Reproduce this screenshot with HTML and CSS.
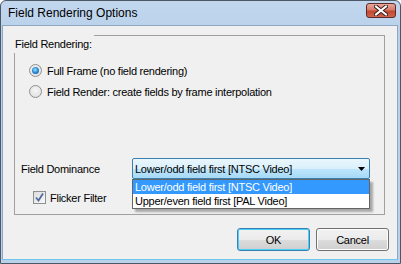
FILE: index.html
```html
<!DOCTYPE html>
<html lang="en">
<head>
    <meta charset="UTF-8">
    <title>Field Rendering Options</title>
    <link rel="stylesheet" href="styles.css">
</head>
<body>
    <div class="window">
        <!-- Title bar -->
        <div class="titlebar">
            <span class="title">Field Rendering Options</span>
            <span class="close">
                <svg width="14" height="11" viewBox="0 0 14 11">
                    <path d="M2 1.5 L12 9.5 M12 1.5 L2 9.5" stroke="#3b1d1d" stroke-width="4" stroke-linecap="square"/>
                    <path d="M2 1.5 L12 9.5 M12 1.5 L2 9.5" stroke="#ffffff" stroke-width="2" stroke-linecap="square"/>
                </svg>
            </span>
        </div>

        <div class="client">
            <!-- Group box -->
            <div class="group">
                <div class="group-label">Field Rendering:</div>

                <div class="options">
                    <div class="option"><span class="radio checked"></span>Full Frame (no field rendering)</div>
                    <div class="option"><span class="radio"></span>Field Render: create fields by frame interpolation</div>
                </div>

                <div class="dominance">
                    <span class="dom-label">Field Dominance</span>
                    <div class="combo">
                        <span class="combo-text">Lower/odd field first [NTSC Video]</span>
                        <svg class="arrow" width="7" height="4" viewBox="0 0 7 4"><path d="M0 0 H7 L3.5 4 Z" fill="#000"/></svg>
                        <!-- open drop-down list -->
                        <ul class="dropdown">
                            <li class="selected">Lower/odd field first [NTSC Video]</li>
                            <li>Upper/even field first [PAL Video]</li>
                        </ul>
                    </div>
                </div>

                <div class="check-row">
                    <span class="checkbox">
                        <svg width="9" height="9" viewBox="0 0 9 9"><path d="M1 4.5 L3.5 7.5 L8 0.5" fill="none" stroke="#4f6aa3" stroke-width="1.8"/></svg>
                    </span>
                    Flicker Filter
                </div>
            </div>

            <!-- Dialog buttons -->
            <div class="buttons">
                <button class="btn default">OK</button>
                <button class="btn">Cancel</button>
            </div>
        </div>
    </div>
</body>
</html>
```

FILE: styles.css
```css
/* General styling */
body {
    margin: 0;
    font-family: "Liberation Sans", Arial, sans-serif;
    font-size: 11px;
    letter-spacing: -0.25px;
    color: #000;
    background: #ffffff;
}

/* Window frame */
.window {
    box-sizing: border-box;
    width: 401px;
    height: 264px;
    border: 1px solid #4d5866;
    border-radius: 6px 6px 0 0;
    background: linear-gradient(#c2d7ee, #b9d1ea 30px, #b9d1ea);
    padding: 0 2px 3px 1px;
    display: flex;
    flex-direction: column;
}

.titlebar {
    height: 24px;
    display: flex;
    align-items: center;
    justify-content: space-between;
    padding-left: 6px;
    padding-right: 2px;
}

.title {
    font-size: 12px;
    letter-spacing: 0;
    color: #000;
}

.close {
    width: 30px;
    height: 15px;
    box-sizing: border-box;
    margin-top: -5px;
    border: 1px solid #5b2a2a;
    border-radius: 3px;
    background: linear-gradient(#e9a898, #d67d6c 45%, #c2472f 55%, #d0654d);
    display: flex;
    align-items: center;
    justify-content: center;
}

/* Client area */
.client {
    flex: 1;
    background: #f0f0f0;
    border: 1px solid #8fa6c0;
    border-bottom-color: #6ec6e8;
    display: flex;
    flex-direction: column;
}

/* Group box */
.group {
    position: relative;
    box-sizing: border-box;
    margin: 9px 0 0 11px;
    width: 371px;
    height: 180px;
    border: 1px solid #a0a0a0;
}

.group-label {
    position: absolute;
    top: -1px;
    left: -1px;
    padding: 3px 2px 3px 1px;
    background: #f0f0f0;
}

.options {
    margin-top: 24px;
    padding-left: 14px;
}

.option {
    height: 21px;
    display: flex;
    align-items: center;
}

.radio {
    box-sizing: border-box;
    width: 13px;
    height: 13px;
    margin-right: 5px;
    border-radius: 50%;
    border: 1px solid #8e8f8f;
    background: radial-gradient(circle at 50% 40%, #f6f6f6, #dcdcdc);
    display: flex;
    align-items: center;
    justify-content: center;
}

.radio.checked::after {
    content: "";
    width: 7px;
    height: 7px;
    border-radius: 50%;
    background: radial-gradient(circle at 45% 40%, #9de2ff, #2a8ad4 50%, #0d3f82);
}

/* Field dominance row */
.dominance {
    display: flex;
    align-items: center;
    margin-top: 56px;
    padding-left: 6px;
}

.dom-label {
    width: 111px;
}

.combo {
    position: relative;
    box-sizing: border-box;
    width: 238px;
    height: 21px;
    border: 1px solid #3c7fb1;
    border-radius: 2px;
    background: linear-gradient(#eaf6fd, #d9f0fc 50%, #bee6fd 50%, #a7d9f5);
    display: flex;
    align-items: center;
    justify-content: space-between;
    padding: 0 4px 0 2px;
}

.dropdown {
    position: absolute;
    top: 20px;
    left: -1px;
    box-sizing: border-box;
    width: 238px;
    margin: 0;
    padding: 0;
    list-style: none;
    background: #fff;
    border: 1px solid #646464;
    box-shadow: 3px 3px 2px rgba(0, 0, 0, 0.3);
}

.dropdown li {
    height: 14px;
    line-height: 14px;
    padding-left: 2px;
}

.dropdown li.selected {
    background: #3399ff;
    color: #fff;
}

/* Checkbox row */
.check-row {
    display: flex;
    align-items: center;
    margin-top: 12px;
    padding-left: 18px;
}

.checkbox {
    box-sizing: border-box;
    width: 13px;
    height: 13px;
    margin-right: 4px;
    border: 1px solid #8e8f8f;
    background: linear-gradient(135deg, #dcdcdc, #fafafa);
    display: flex;
    align-items: center;
    justify-content: center;
}

/* Buttons */
.buttons {
    display: flex;
    justify-content: flex-end;
    gap: 6px;
    margin-top: 13px;
    padding-right: 8px;
}

.btn {
    box-sizing: border-box;
    width: 73px;
    height: 23px;
    font-family: "Liberation Sans", Arial, sans-serif;
    font-size: 11px;
    letter-spacing: -0.25px;
    color: #000;
    border: 1px solid #707070;
    border-radius: 3px;
    background: linear-gradient(#f2f2f2, #ebebeb 50%, #dddddd 50%, #cfcfcf);
    box-shadow: inset 0 0 0 1px #fcfcfc;
    padding: 0;
}

.btn.default {
    border-color: #3c7fb1;
    box-shadow: inset 0 0 0 1px #48d0fa;
}
```
